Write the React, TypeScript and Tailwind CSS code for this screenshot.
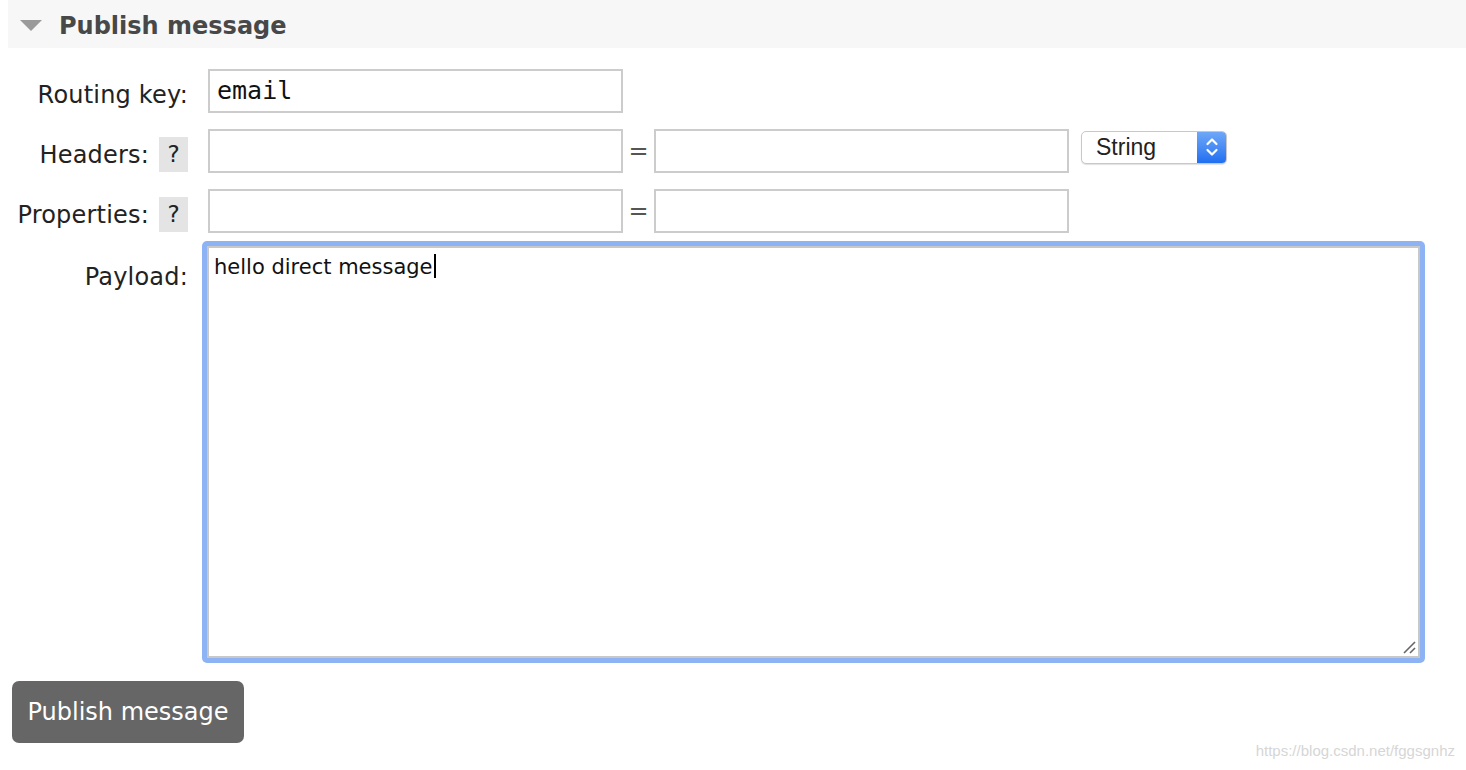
const font = "font-['DejaVu_Sans',Verdana,sans-serif]";

function Label({ text, help }: { text: string; help?: boolean }) {
  return (
    <div className="flex h-[44px] w-[188px] shrink-0 items-center justify-end gap-[10px] pt-[7px]">
      <span className="text-[24px] leading-none tracking-[0.2px] text-[#222]">{text}</span>
      {help && (
        <span className="flex h-[35px] w-[29px] items-center justify-center bg-[#e4e4e4] text-[23px] text-[#222]">
          ?
        </span>
      )}
    </div>
  );
}

function Field({ value, mono }: { value?: string; mono?: boolean }) {
  return (
    <div
      className={`flex h-[44px] w-[415px] items-center border-2 border-[#cccccc] bg-white px-[7px] text-[25px] text-[#111] ${
        mono ? "font-['DejaVu_Sans_Mono',monospace]" : ""
      }`}
    >
      {value}
    </div>
  );
}

function Equals() {
  return <span className="w-[31px] text-center text-[24px] text-[#555]">=</span>;
}

export default function App() {
  return (
    <div className={`relative h-[770px] w-[1466px] bg-white ${font}`}>
      {/* en-tête de section */}
      <div className="ml-[8px] flex h-[48px] items-center gap-[17px] bg-[#f7f7f7] pl-[12px] pt-[4px]">
        <svg width="22" height="12" viewBox="0 0 22 12">
          <polygon points="0,0 22,0 11,11" fill="#9a9a9a" />
        </svg>
        <h2 className="text-[24px] font-bold leading-none text-[#484848]">Publish message</h2>
      </div>

      <div className="mt-[21px] flex flex-col">
        <div className="flex items-start gap-[20px]">
          <Label text="Routing key:" />
          <Field value="email" mono />
        </div>

        <div className="mt-[16px] flex items-start gap-[20px]">
          <Label text="Headers:" help />
          <div className="flex items-center">
            <Field />
            <Equals />
            <Field />
            <div className="mb-[8px] ml-[12px] flex h-[33px] w-[146px] items-stretch overflow-hidden rounded-[5px] border border-[#c8c8c8] bg-white shadow-[0_1px_1px_rgba(0,0,0,0.12)]">
              <span className="flex flex-1 items-center pl-[14px] font-['Liberation_Sans',Arial,sans-serif] text-[23px] text-[#222]">
                String
              </span>
              <span className="flex w-[29px] items-center justify-center bg-gradient-to-b from-[#6ea7f8] to-[#1f6ff0]">
                <svg width="14" height="24" viewBox="0 0 14 24" fill="none" stroke="white" strokeWidth="2.2" strokeLinecap="round" strokeLinejoin="round">
                  <path d="M2.5 9 L7 4.5 L11.5 9" />
                  <path d="M2.5 15 L7 19.5 L11.5 15" />
                </svg>
              </span>
            </div>
          </div>
        </div>

        <div className="mt-[16px] flex items-start gap-[20px]">
          <Label text="Properties:" help />
          <div className="flex items-center">
            <Field />
            <Equals />
            <Field />
          </div>
        </div>

        <div className="mt-[8px] flex items-start gap-[14px]">
          <div className="flex w-[188px] shrink-0 justify-end pt-[24px]">
            <span className="text-[24px] leading-none tracking-[0.2px] text-[#222]">Payload:</span>
          </div>
          <div className="relative h-[422px] w-[1223px] rounded-[5px] bg-[#8db3f4] p-[5px]">
            <div className="h-full w-full border-2 border-[#c8c8c8] bg-white px-[5px] pt-[2px] text-[21px] text-[#111]">
              hello direct message
              <span className="ml-[1px] inline-block h-[24px] w-[2px] translate-y-[4px] bg-black" />
            </div>
            <svg className="absolute bottom-[9px] right-[9px]" width="14" height="14" viewBox="0 0 14 14">
              <line x1="2" y1="13" x2="13" y2="2" stroke="#666" strokeWidth="1.6" />
              <line x1="8" y1="13" x2="13" y2="8" stroke="#666" strokeWidth="1.6" />
            </svg>
          </div>
        </div>

        <div className="ml-[12px] mt-[18px]">
          <button className="h-[62px] w-[232px] rounded-[7px] bg-[#666666] text-[24px] text-white">
            Publish message
          </button>
        </div>
      </div>

      <span className="absolute bottom-[8px] right-[11px] font-['Liberation_Sans',Arial,sans-serif] text-[15px] text-[#d6d6d6]">
        https://blog.csdn.net/fggsgnhz
      </span>
    </div>
  );
}
